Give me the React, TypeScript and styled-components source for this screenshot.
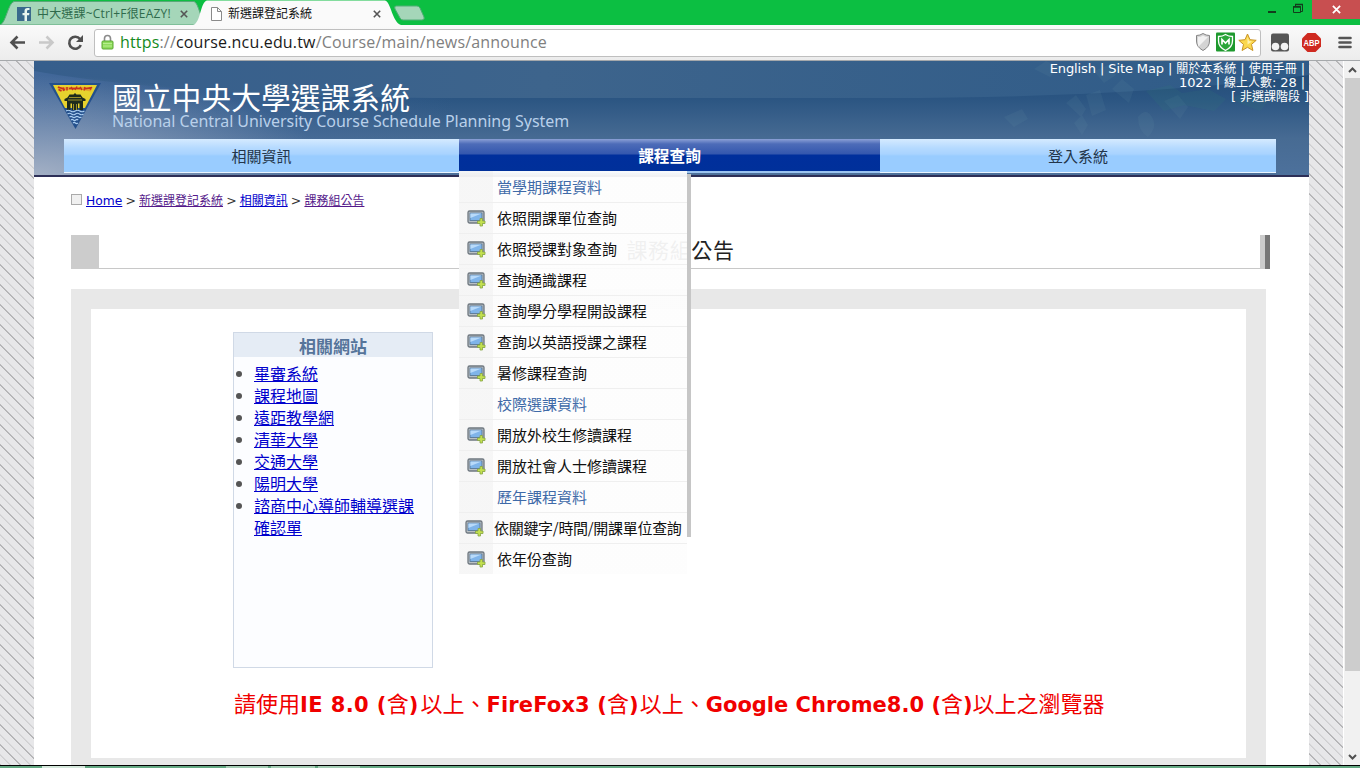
import React from "react";
import styled, { createGlobalStyle } from "styled-components";

const cjk = `"Noto Sans CJK TC", sans-serif`;
const verdana = `"DejaVu Sans", ${cjk}`;

const Global = createGlobalStyle`
  * { box-sizing: border-box; }
  body { margin: 0; overflow: hidden; background: #fff; font-family: ${verdana}; }
`;

const Window = styled.div`
  width: 1360px;
  height: 768px;
  display: flex;
  flex-direction: column;
  overflow: hidden;
`;

/* ---------- browser chrome ---------- */
const TabStrip = styled.div`
  height: 25px;
  flex: none;
  display: flex;
  background: #0cbf42;
  position: relative;
`;
const TabShapes = styled.svg`
  position: absolute;
  left: 0;
  top: 0;
`;
const Tab = styled.div<{ $w: number; $pad: number; $active?: boolean }>`
  position: relative;
  width: ${(p) => p.$w}px;
  padding: 2px 0 0 ${(p) => p.$pad}px;
  height: 25px;
  display: flex;
  align-items: center;
  font: 12px/20px "Open Sans", ${cjk};
  color: ${(p) => (p.$active ? "#111" : "#2f6b4c")};
  white-space: nowrap;
  svg { flex: none; display: block; }
`;
const TabTitle = styled.span<{ $w: number; $gap: number; $ls?: number }>`
  width: ${(p) => p.$w}px;
  margin-left: ${(p) => p.$gap}px;
  overflow: hidden;
  letter-spacing: ${(p) => p.$ls ?? 0}px;
`;
const WindowButtons = styled.div`
  position: relative;
  margin-left: auto;
  display: flex;
`;
const CloseButton = styled.div`
  width: 48px;
  height: 19px;
  background: #c84f50;
  display: flex;
  align-items: center;
  justify-content: center;
`;
const SizeButtons = styled.svg`
  display: block;
`;

const Toolbar = styled.div`
  height: 36px;
  flex: none;
  display: flex;
  align-items: center;
  background: linear-gradient(#fafafa, #ececec);
  border-bottom: 1px solid #a5a8ab;
  svg { display: block; flex: none; }
`;
const NavIcons = styled.div`
  width: 94px;
`;
const AddressBar = styled.div`
  width: 1167px;
  height: 28px;
  display: flex;
  align-items: center;
  background: #fff;
  border: 1px solid #bfbfbf;
  border-radius: 3px;
  padding: 0 0 1px 6px;
`;
const Url = styled.span`
  flex: 1;
  margin-left: 6px;
  font: 16px/24px "Open Sans", sans-serif;
  letter-spacing: 0.17px;
  color: #808080;
  em { font-style: normal; color: #148a1d; }
  b { font-weight: 400; color: #1a1a1a; }
`;

/* ---------- page ---------- */
const Viewport = styled.div`
  height: 704px;
  flex: none;
  display: flex;
  overflow: hidden;
  background:
    repeating-linear-gradient(45deg, #b2b2b4 0 0.6px, #e7e7e9 1.2px 6.6px, #cdcdcf 7.1px 7.5px, #e7e7e9 8.2px 13.6px, #b2b2b4 14.142px);
`;
const Page = styled.div`
  width: 1275px;
  margin-left: 34px;
  background: #fff;
  display: flex;
  flex-direction: column;
`;
const Header = styled.header`
  height: 116px;
  flex: none;
  position: relative;
  border-bottom: 2px solid #2d2f57;
  background: #35608c;
`;
const HeaderArt = styled.svg`
  position: absolute;
  inset: 0;
`;
const HeaderTop = styled.div`
  position: relative;
  height: 78px;
  display: flex;
  justify-content: space-between;
`;
const Brand = styled.div`
  display: flex;
  padding-left: 15px;
  svg { margin-top: 21px; display: block; }
`;
const BrandText = styled.div`
  margin-left: 11px;
  padding-top: 19px;
  white-space: nowrap;
`;
const BrandName = styled.div`
  font: 400 29.8px/33px ${cjk};
  color: #fff;
`;
const BrandSub = styled.div`
  font: 16px/17px "Noto Sans", sans-serif;
  letter-spacing: -0.05px;
  color: #b9d0ea;
`;
const Quick = styled.div`
  font: 13px/14px ${verdana};
  text-align: right;
  color: #fff;
  padding: 1px 4px 0 0;
  white-space: nowrap;
`;
const QuickRow = styled.div<{ $shift?: number }>`
  margin-right: ${(p) => p.$shift ?? 0}px;
  letter-spacing: -0.1px;
  span { font-size: 12px; letter-spacing: 0; }
`;
const Nav = styled.nav`
  position: relative;
  display: flex;
  width: 1212px;
  height: 34px;
  margin-left: 30px;
`;
const NavItem = styled.div<{ $w: number; $on?: boolean }>`
  width: ${(p) => p.$w}px;
  text-align: center;
  font: ${(p) => (p.$on ? "700 15.7px" : "400 15px")}/34px ${cjk};
  color: ${(p) => (p.$on ? "#fff" : "#23354a")};
  background: ${(p) =>
    p.$on
      ? "linear-gradient(#8ba0d6 0, #4d6cb8 5px, #3457ae 15px, #002f9c 16px, #00309a 32px, #9cc4f0 32px)"
      : "linear-gradient(#d5eaff 0, #b5daff 9px, #a9d3ff 15px, #99ccff 17px, #99ccff 33px, #eaf5ff 33px)"};
`;
const Menu = styled.div`
  position: absolute;
  z-index: 2;
  left: 395px;
  top: 32px;
  width: 228px;
`;
const MenuShadow = styled.div`
  position: absolute;
  left: 228px;
  top: 3px;
  width: 4px;
  height: 363px;
  background: #c6c6c6;
`;
const MenuRow = styled.div<{ $header?: boolean; $tight?: boolean }>`
  height: 31px;
  display: flex;
  align-items: center;
  border-bottom: 1px solid #efefef;
  background: linear-gradient(90deg, rgba(246, 246, 246, 0.96) 34px, rgba(253, 253, 253, 0.94) 34px);
  font: 15px/30px ${cjk};
  color: ${(p) => (p.$header ? "#3f6aa8" : "#111")};
  white-space: nowrap;
  padding-left: ${(p) => (p.$header ? 38 : p.$tight ? 6 : 8)}px;
  letter-spacing: ${(p) => (p.$tight ? -0.3 : 0)}px;
  svg { margin-right: ${(p) => (p.$tight ? 10 : 11)}px; flex: none; }
  &:nth-child(2) { height: 32px; padding-top: 1px; }
  &:last-child { border-bottom: 0; height: 30px; }
`;

const Crumbs = styled.div`
  display: flex;
  align-items: center;
  height: 18px;
  margin: 15px 0 0 37px;
  font: 12.5px/18px ${verdana};
  color: #333;
  white-space: nowrap;
`;
const BlankIcon = styled.i`
  width: 11px;
  height: 11px;
  border: 1px solid #aaa;
  background: #f0f0f0;
  margin: -3px 4px 0 0;
`;
const Link = styled.a<{ $visited?: boolean }>`
  color: ${(p) => (p.$visited ? "#551a8b" : "#0000cc")};
  text-decoration: underline;
`;
const CrumbLink = styled(Link)<{ $latin?: boolean }>`
  font-size: ${(p) => (p.$latin ? 12.3 : 12)}px;
`;
const Sep = styled.span`
  width: 16.7px;
  text-align: center;
`;
const TitleBar = styled.h1`
  margin: 25px 0 0 37px;
  width: 1199px;
  height: 34px;
  border-bottom: 1px solid #c8c8c8;
  display: flex;
  justify-content: space-between;
  font: 400 21px/29px ${cjk};
  letter-spacing: 0.6px;
  color: #222;
`;
const TitleBlock = styled.i`
  width: 28px;
  height: 34px;
  background: #ccc;
`;
const TitleEdge = styled.i`
  width: 10px;
  height: 34px;
  background: linear-gradient(90deg, #ccc 5px, #777 5px);
`;
const TitleText = styled.span`
  margin-left: 2px;
`;
const Panel = styled.main`
  margin: 20px 0 0 37px;
  width: 1195px;
  height: 489px;
  flex: none;
  border: 20px solid #e8e8e8;
  padding: 23px 0 0 142px;
`;
const Related = styled.section`
  width: 200px;
  height: 336px;
  border: 1px solid #d0d9e6;
  background: #fcfdff;
`;
const RelatedTitle = styled.h2`
  margin: 0;
  height: 24px;
  background: #e5ecf5;
  text-align: center;
  font: 700 17px/25px ${cjk};
  color: #55749a;
`;
const RelatedList = styled.ul`
  list-style: none;
  margin: 5px 0 0;
  padding: 0 10px 0 20px;
  font: 16px/22px ${cjk};
`;
const RelatedItem = styled.li`
  position: relative;
  &::before {
    content: "";
    position: absolute;
    left: -18px;
    top: 9px;
    width: 6px;
    height: 6px;
    border-radius: 50%;
    background: #555;
  }
`;
const Notice = styled.p`
  margin: 19px 0 0 1px;
  font: 700 21px/30px ${verdana};
  color: #f00000;
  white-space: nowrap;
`;
const Han = styled.span`
  font: 400 22px/30px ${cjk};
`;
const Latin = styled.span<{ $ls?: number }>`
  letter-spacing: ${(p) => p.$ls ?? 0}px;
`;

const ScrollBar = styled.div`
  width: 17px;
  margin-left: 34px;
  background: #f1f1f1;
  border-left: 1px solid #fff;
  display: flex;
  flex-direction: column;
  align-items: center;
  justify-content: space-between;
  svg { display: block; }
`;
const Thumb = styled.div`
  width: 15px;
  height: 593px;
  background: #cdcdcd;
  margin-bottom: auto;
`;
const Taskbar = styled.div`
  height: 3px;
  flex: none;
  border-top: 1px solid #000;
  background: linear-gradient(90deg, #64a883 42px, #d5e8dc 42px 85px, #64a883 85px 226px, #a5cdb5 226px 268px, #64a883 268px 271px, #a5cdb5 271px 315px, #64a883 315px 318px, #a5cdb5 318px 360px, #64a883 360px);
`;

const Cross = ({ c = "#555", s = 8 }: { c?: string; s?: number }) => (
  <svg width={s} height={s} viewBox="0 0 8 8">
    <path d="M.8.8l6.400 6.400M7.200.8L.8 7.200" stroke={c} strokeWidth="1.600" />
  </svg>
);

const AddScreen = () => (
  <svg width="19" height="18" viewBox="0 0 19 18">
    <rect x="1" y="2" width="16" height="12" rx="1.6" fill="#b9c0c4" stroke="#6f7880" strokeWidth="1.3" />
    <rect x="3" y="4" width="12" height="7.5" fill="#7fb4ea" stroke="#52708f" strokeWidth=".8" />
    <path d="M3.4 4.4h11.2L3.4 9z" fill="#b8dafa" />
    <path d="M13 9.500h2.500V12H18v2.500h-2.500V17H13v-2.500h-2.500V12H13z" fill="#c3e04f" stroke="#86a545" strokeWidth=".8" />
  </svg>
);

const Emblem = () => (
  <svg width="52" height="48" viewBox="0 0 52 48">
    <path d="M0 1h52L26.5 47z" fill="#24508c" />
    <path d="M4 3h44L36 26H16z" fill="#e6d22e" />
    <path d="M8 5h36l-2.4 4.6Q26 5.500 10.500 9.600z" fill="#e4a32c" />
    <path d="M9.500 7.500l3 1.500M14 5.500l1 3.500M18 5v3.500M22 5l2 3M28 4.500l-2 3.500M31 5l2 3M36 5l-1 3.500M40 5.500l2 2M9 5l7 2.500M20 6.500h11M35 7l8-1.500" stroke="#c8321e" strokeWidth="1.500" />
    <path d="M15.500 17l3-1.500 2-3h4l1.500-1.500 1.500 1.500h4l2 3 3 1.500v2H34v9h-3.500v-6.500H29V28h-6v-6.500h-1.500V28H18v-9h-2.500z" fill="#1d2b1d" />
    <path d="M20 15.500h12M19 18h14M24.500 22v6M27.500 22v6" stroke="#a99a2a" strokeWidth=".9" />
    <path d="M17 29q2.300-1.500 4.600 0t4.600 0 4.600 0 4.600 0M18.500 32q2-1.500 4 0t4 0 4 0 4 0M20.500 35q1.500-1.300 3 0t3 0 3 0 3 0M22 38q1.200-1.200 2.400 0t2.400 0 2.400 0M24 41q1.200-1.200 2.400 0t2.400 0" stroke="#a9cdf0" strokeWidth="1.100" fill="none" />
  </svg>
);

const menu: { label: string; header?: boolean; tight?: boolean }[] = [
  { label: "當學期課程資料", header: true },
  { label: "依照開課單位查詢" },
  { label: "依照授課對象查詢" },
  { label: "查詢通識課程" },
  { label: "查詢學分學程開設課程" },
  { label: "查詢以英語授課之課程" },
  { label: "暑修課程查詢" },
  { label: "校際選課資料", header: true },
  { label: "開放外校生修讀課程" },
  { label: "開放社會人士修讀課程" },
  { label: "歷年課程資料", header: true },
  { label: "依關鍵字/時間/開課單位查詢", tight: true },
  { label: "依年份查詢" },
];

const related = ["畢審系統", "課程地圖", "遠距教學網", "清華大學", "交通大學", "陽明大學", "諮商中心導師輔導選課確認單"];

export default function App() {
  return (
    <Window>
      <Global />
      <TabStrip>
        <TabShapes width="440" height="25">
          <path d="M0 25C6 23 8 3 14 1.500H194C199 3 200 20 207 25z" fill="#a5d6b9" stroke="#58a878" />
          <path d="M193 25C201 23 200 2 207 .5H385C391 2 392 22 401 25z" fill="#fafafa" />
          <path d="M396 6h21q2 0 3 2l4 9q1 3-2 3h-19q-2 0-3-2l-5-9q-1-3 1-3z" fill="#a5d6b9" stroke="#4fae74" />
        </TabShapes>
        <Tab $w={197} $pad={17}>
          <svg width="14" height="14" viewBox="0 0 14 14">
            <rect width="14" height="14" fill="#3a6a8c" />
            <path d="M12.500 3h-1.300Q10 3 10 4.200V6h2.400l-.3 2.200H10V14H7.500V8.200H5.500V6h2V4q0-3 3-3h2z" fill="#e8f5ee" />
          </svg>
          <TabTitle $w={143} $gap={6} $ls={0.18}>中大選課~Ctrl+F很EAZY!</TabTitle>
          <Cross />
        </Tab>
        <Tab $w={210} $pad={14} $active>
          <svg width="11" height="14" viewBox="0 0 11 14">
            <path d="M.5.5h6L10.500 4.500v9H.5zM6.500.5v4h4" fill="#fff" stroke="#8a8a8a" />
          </svg>
          <TabTitle $w={145} $gap={6}>新選課登記系統</TabTitle>
          <Cross />
        </Tab>
        <WindowButtons>
          <SizeButtons width="60" height="24" viewBox="0 0 60 24">
            <path d="M16 12h8" stroke="#123d1c" strokeWidth="2" />
            <path d="M41.500 6.500h7v6h-7zM43.500 6V4.500h7v7H49" fill="none" stroke="#123d1c" />
            <path d="M41 7h8M43 4.500h8" stroke="#123d1c" strokeWidth="1.500" />
          </SizeButtons>
          <CloseButton>
            <Cross c="#fff" s={9} />
          </CloseButton>
        </WindowButtons>
      </TabStrip>
      <Toolbar>
        <NavIcons>
          <svg width="94" height="34" viewBox="0 0 94 34">
            <path d="M25 16.500H12M17.500 10.500l-6 6 6 6" fill="none" stroke="#505050" strokeWidth="2.600" />
            <path d="M39 16.500h13M46.500 10.500l6 6-6 6" fill="none" stroke="#c9c9c9" strokeWidth="2.600" />
            <path d="M80 13a6 6 0 1 0 .8 6" fill="none" stroke="#505050" strokeWidth="2.600" />
            <path d="M83 9v7h-7z" fill="#505050" />
          </svg>
        </NavIcons>
        <AddressBar>
          <svg width="13" height="16" viewBox="0 0 13 16">
            <path d="M3.500 7.500V4.500a3 3 0 0 1 6 0v3" fill="none" stroke="#8b8b8b" strokeWidth="1.600" />
            <rect x="1" y="7" width="11" height="8" rx="1" fill="#8fdc5c" stroke="#5ba832" />
            <path d="M2 9.500h9M2 12h9" stroke="#b7ee8f" />
          </svg>
          <Url>
            <em>https</em>://<b>course.ncu.edu.tw</b>/Course/main/news/announce
          </Url>
          <svg width="66" height="20" viewBox="0 0 66 20">
            <path d="M9 1.500q3 2 6.500 2V9q0 6-6.500 9.500Q2.500 15 2.500 9V3.500q3.500 0 6.500-2z" fill="#d4d4d4" stroke="#858585" />
            <path d="M9 3.500q2 1.500 5 1.500L4.500 14.500Q3.500 12 4 5q3 0 5-1.500z" fill="#f2f2f2" />
            <rect x="22" y=".5" width="19" height="19" rx="1" fill="#1e9a2e" />
            <path d="M31.500 2.500q3 2 7 2V9q0 6-7 9.500-7-3.500-7-9.500V4.500q4 0 7-2z" fill="#2ba63a" stroke="#fff" strokeWidth="1.300" />
            <path d="M28 12.500V7.500l3.500 3.500L35 7.500v5" fill="none" stroke="#fff" strokeWidth="1.700" />
            <path d="M53.500 2l2.500 5.700 6.200.6-4.700 4.100 1.400 6.100-5.400-3.200-5.400 3.200 1.400-6.100-4.700-4.100 6.200-.6z" fill="#fbd84f" stroke="#c99325" />
            <path d="M53.500 5l1.500 4 3 .5-4.500 3z" fill="#fff2ae" />
          </svg>
        </AddressBar>
        <svg width="99" height="30" viewBox="0 0 99 30">
          <rect x="10" y="5.500" width="18" height="18" rx="2" fill="#555" />
          <circle cx="14.500" cy="18.500" r="3.800" fill="#f4f4f4" />
          <circle cx="23.500" cy="18.500" r="3.800" fill="#f4f4f4" />
          <path d="M46.500 5h8l5.500 5.500v8L54.500 24h-8L41 18.500v-8z" fill="#cf2a20" />
          <text x="50.500" y="18" textAnchor="middle" fontFamily="Liberation Sans" fontWeight="700" fontSize="9.500" fill="#fff" textLength="16" lengthAdjust="spacingAndGlyphs">ABP</text>
          <path d="M78.500 10h11M78.500 14.500h11M78.500 19h11" stroke="#555" strokeWidth="2.600" strokeLinecap="round" />
        </svg>
      </Toolbar>
      <Viewport>
        <Page>
          <Header>
            <HeaderArt width="1275" height="114" viewBox="0 0 1275 114">
              <defs>
                <linearGradient id="base" x1="0" y1="0" x2="0" y2="1">
                  <stop offset="0" stopColor="#1f4872" />
                  <stop offset=".33" stopColor="#2b5582" />
                  <stop offset=".68" stopColor="#476b93" />
                  <stop offset="1" stopColor="#4d719c" />
                </linearGradient>
                <linearGradient id="upper" x1="0" y1="0" x2="1" y2="0">
                  <stop offset="0" stopColor="#365e8c" />
                  <stop offset=".4" stopColor="#3d648c" />
                  <stop offset="1" stopColor="#2f5b88" />
                </linearGradient>
                <linearGradient id="haze" x1="0" y1="0" x2="1" y2="0">
                  <stop offset="0" stopColor="#42689a" />
                  <stop offset="1" stopColor="#42689a" stopOpacity="0" />
                </linearGradient>
                <radialGradient id="glow" gradientUnits="userSpaceOnUse" cx="0" cy="0" r="1" gradientTransform="translate(0 114) scale(300 100)">
                  <stop offset="0" stopColor="#a3b0c5" />
                  <stop offset="1" stopColor="#a3b0c5" stopOpacity="0" />
                </radialGradient>
              </defs>
              <rect width="1275" height="114" fill="url(#base)" />
              <rect width="420" height="114" fill="url(#haze)" />
              <path d="M0 0H1275V14Q1100 37 850 37H400Q140 35 0 10z" fill="url(#upper)" />
              <rect width="300" height="114" fill="url(#glow)" />
              <g fill="#7fa6b4" opacity=".09">
                <path d="M1032 42l10-8 10 14-5 8zM1052 34l14-5 6 20-14 6zM1078 28l10-10 12 10-5 14zM1104 56q8-10 14 0t-4 20q-10-6-10-20zM1040 62l8-8 6 10-6 10zM970 56l18-8 6 10-14 8zM1000 8l12-8 14 6-10 10zM1130 40l14-6 10 12-8 12zM1060 10l14-6 8 10-12 8z" />
              </g>
              <g fill="#2f7a78" opacity=".16">
                <path d="M1112 30l24-6 12 8 26-4 18 10-12 12-30-6-20 6zM1196 38l18-8 22 8-10 12z" />
              </g>
            </HeaderArt>
            <HeaderTop>
              <Brand>
                <Emblem />
                <BrandText>
                  <BrandName>國立中央大學選課系統</BrandName>
                  <BrandSub>National Central University Course Schedule Planning System</BrandSub>
                </BrandText>
              </Brand>
              <Quick>
                <QuickRow>English | Site Map | <span>關於本系統</span> | <span>使用手冊</span> |</QuickRow>
                <QuickRow>1022 | <span>線上人數</span>: 28 |</QuickRow>
                <QuickRow $shift={-4}>[ <span>非選課階段</span> ]</QuickRow>
              </Quick>
            </HeaderTop>
            <Nav>
              <NavItem $w={395}>相關資訊</NavItem>
              <NavItem $w={421} $on>課程查詢</NavItem>
              <NavItem $w={396}>登入系統</NavItem>
              <Menu>
                <MenuShadow />
                {menu.map((m) => (
                  <MenuRow key={m.label} $header={m.header} $tight={m.tight}>
                    {!m.header && <AddScreen />}
                    {m.label}
                  </MenuRow>
                ))}
              </Menu>
            </Nav>
          </Header>
          <Crumbs>
            <BlankIcon />
            <CrumbLink $latin>Home</CrumbLink>
            <Sep>&gt;</Sep>
            <CrumbLink $visited>新選課登記系統</CrumbLink>
            <Sep>&gt;</Sep>
            <CrumbLink>相關資訊</CrumbLink>
            <Sep>&gt;</Sep>
            <CrumbLink $visited>課務組公告</CrumbLink>
          </Crumbs>
          <TitleBar>
            <TitleBlock />
            <TitleText>課務組公告</TitleText>
            <TitleEdge />
          </TitleBar>
          <Panel>
            <Related>
              <RelatedTitle>相關網站</RelatedTitle>
              <RelatedList>
                {related.map((r) => (
                  <RelatedItem key={r}>
                    <Link>{r}</Link>
                  </RelatedItem>
                ))}
              </RelatedList>
            </Related>
            <Notice>
              <Han>請使用</Han>
              <Latin $ls={0.4}>IE 8.0 (</Latin>
              <Han>含</Han>
              <Latin $ls={2}>)</Latin>
              <Han>以上、</Han>
              <Latin $ls={0.15}>FireFox3 (</Latin>
              <Han>含</Han>
              <Latin $ls={1}>)</Latin>
              <Han>以上、</Han>
              <Latin>Google Chrome8.0 (</Latin>
              <Han>含</Han>
              <Latin>)</Latin>
              <Han>以上之瀏覽器</Han>
            </Notice>
          </Panel>
        </Page>
        <ScrollBar>
          <svg width="15" height="17" viewBox="0 0 15 17">
            <path d="M4 11l3.500-3.500L11 11" fill="none" stroke="#505050" strokeWidth="2" />
          </svg>
          <Thumb />
          <svg width="15" height="17" viewBox="0 0 15 17">
            <path d="M4 7l3.500 3.500L11 7" fill="none" stroke="#505050" strokeWidth="2" />
          </svg>
        </ScrollBar>
      </Viewport>
      <Taskbar />
    </Window>
  );
}
